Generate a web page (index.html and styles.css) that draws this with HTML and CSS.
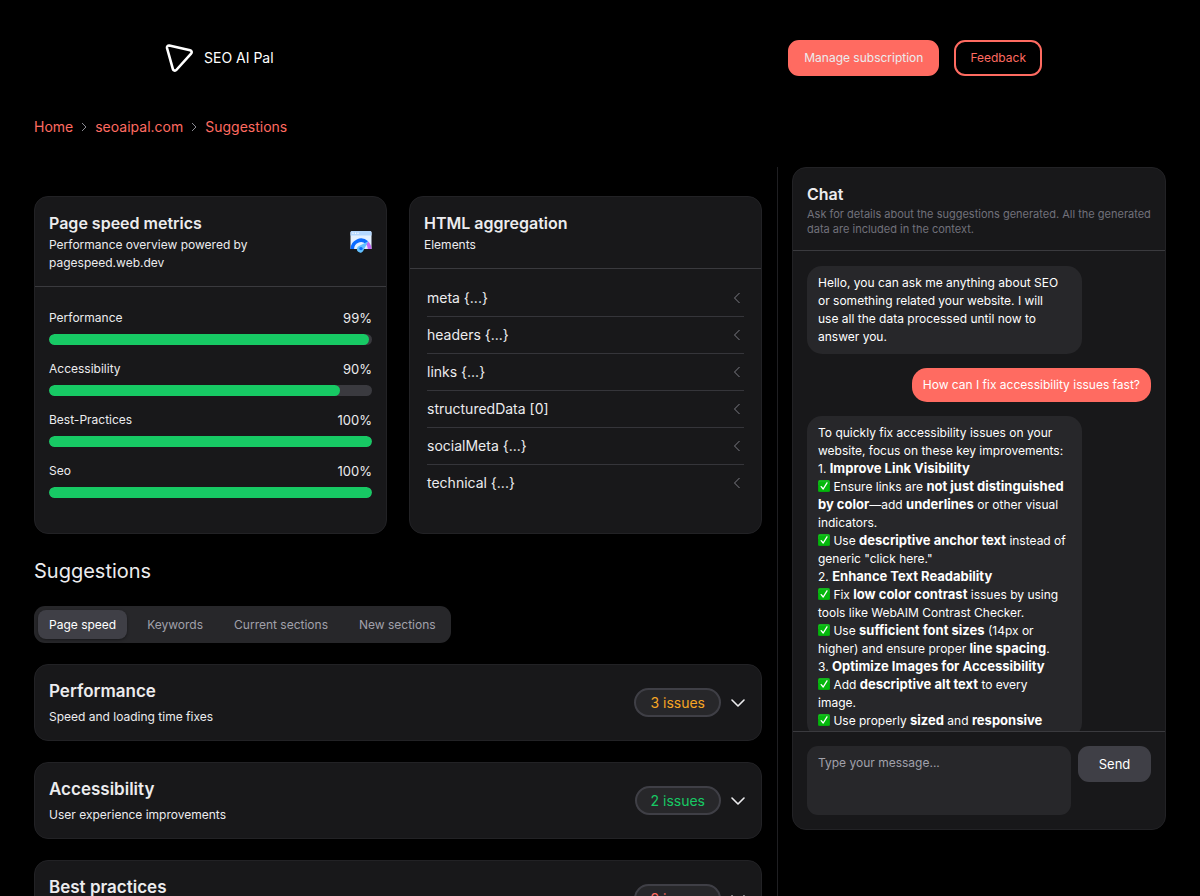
FILE: index.html
```html
<!DOCTYPE html>
<html lang="en">
<head>
<meta charset="utf-8">
<meta name="viewport" content="width=device-width, initial-scale=1">
<title>SEO AI Pal</title>
<link rel="stylesheet" href="styles.css">
</head>
<body>
<svg class="sprite" aria-hidden="true">
  <symbol id="check" viewBox="0 0 12 12">
    <rect width="12" height="12" rx="1.6" fill="#05a80c"/>
    <rect x=".6" y=".5" width="10.8" height="5" rx="1.2" fill="#3fd04a" opacity=".55"/>
    <rect x="1" y="1.4" width="10" height="9.6" rx="1" fill="#04b80c"/>
    <path d="M3.200 6.600 5.200 9 9 2.800" fill="none" stroke="#fff" stroke-width="1.300" stroke-linecap="round" stroke-linejoin="round"/>
  </symbol>
  <symbol id="left" viewBox="0 0 8 12"><path d="M6.500 1 1.500 6l5 5" fill="none" stroke="currentColor" stroke-width="1"/></symbol>
  <symbol id="right" viewBox="0 0 8 12"><path d="M2 2l4 4-4 4" fill="none" stroke="currentColor" stroke-width="1"/></symbol>
  <symbol id="down" viewBox="0 0 14 8"><path d="M1 1l6 6 6-6" fill="none" stroke="currentColor" stroke-width="1.600" stroke-linecap="round" stroke-linejoin="round"/></symbol>
</svg>
<div class="page">
  <header class="topbar">
    <a class="brand" href="#">
      <svg class="brand-mark" viewBox="0 0 40 32" aria-hidden="true"><path d="M11.300 3.600 32.100 8.200a2 2 0 0 1 1 3.400L18.300 28a2 2 0 0 1-3.400-.9L9 6a2 2 0 0 1 2.300-2.400Z" fill="none" stroke="#fff" stroke-width="2.600" stroke-linejoin="round"/></svg>
      <span>SEO AI Pal</span>
    </a>
    <div class="actions">
      <button class="btn btn-solid" type="button">Manage subscription</button>
      <button class="btn btn-outline" type="button">Feedback</button>
    </div>
  </header>

  <nav class="crumbs" aria-label="Breadcrumb">
    <a href="#">Home</a>
    <svg class="crumb-sep" aria-hidden="true"><use href="#right"/></svg>
    <a href="#">seoaipal.com</a>
    <svg class="crumb-sep" aria-hidden="true"><use href="#right"/></svg>
    <a href="#">Suggestions</a>
  </nav>

  <div class="layout">
    <main class="content">
      <div class="overview">
        <section class="card">
          <header class="card-head split">
            <div>
              <h2 class="card-title">Page speed metrics</h2>
              <p class="card-sub">Performance overview powered by pagespeed.web.dev</p>
            </div>
            <svg class="speed-icon" viewBox="0 0 22 22" aria-hidden="true">
              <path d="M2 0h18a1.500 1.500 0 0 1 1.500 1.500V18H.5V1.500A1.500 1.500 0 0 1 2 0Z" fill="#e3f0ff"/>
              <path d="M2 0h18a1.500 1.500 0 0 1 1.500 1.500V4.600H.5V1.500A1.500 1.500 0 0 1 2 0Z" fill="#b5d8ff"/>
              <circle cx="3" cy="2.300" r=".7" fill="#fff"/><circle cx="5.500" cy="2.300" r=".7" fill="#fff"/><circle cx="8" cy="2.300" r=".7" fill="#fff"/>
              <path d="M2.300 18a8.700 8.700 0 0 1 14.600-6.400" fill="none" stroke="#0b6bff" stroke-width="3.600"/>
              <path d="M17 11.700a8.700 8.700 0 0 1 2.700 6.300" fill="none" stroke="#c468f5" stroke-width="3.600"/>
              <path d="M18.300 10.200 13.800 18.800A3.500 3.500 0 1 1 9 14.900Z" fill="#62c0ff"/>
              <circle cx="11" cy="17.600" r="1.700" fill="#0b6bff"/>
            </svg>
          </header>
          <div class="metrics">
            <div class="metric">
              <div class="metric-row"><span id="m1">Performance</span><span class="value">99%</span></div>
              <div class="track" role="progressbar" aria-labelledby="m1" aria-valuenow="99"><div class="fill" style="width:99%"></div></div>
            </div>
            <div class="metric">
              <div class="metric-row"><span id="m2">Accessibility</span><span class="value">90%</span></div>
              <div class="track" role="progressbar" aria-labelledby="m2" aria-valuenow="90"><div class="fill" style="width:90%"></div></div>
            </div>
            <div class="metric">
              <div class="metric-row"><span id="m3">Best-Practices</span><span class="value">100%</span></div>
              <div class="track" role="progressbar" aria-labelledby="m3" aria-valuenow="100"><div class="fill" style="width:100%"></div></div>
            </div>
            <div class="metric">
              <div class="metric-row"><span id="m4">Seo</span><span class="value">100%</span></div>
              <div class="track" role="progressbar" aria-labelledby="m4" aria-valuenow="100"><div class="fill" style="width:100%"></div></div>
            </div>
          </div>
        </section>

        <section class="card">
          <header class="card-head">
            <h2 class="card-title">HTML aggregation</h2>
            <p class="card-sub">Elements</p>
          </header>
          <div class="elements">
            <button class="element" type="button">meta {...}<svg aria-hidden="true"><use href="#left"/></svg></button>
            <button class="element" type="button">headers {...}<svg aria-hidden="true"><use href="#left"/></svg></button>
            <button class="element" type="button">links {...}<svg aria-hidden="true"><use href="#left"/></svg></button>
            <button class="element" type="button">structuredData [0]<svg aria-hidden="true"><use href="#left"/></svg></button>
            <button class="element" type="button">socialMeta {...}<svg aria-hidden="true"><use href="#left"/></svg></button>
            <button class="element" type="button">technical {...}<svg aria-hidden="true"><use href="#left"/></svg></button>
          </div>
        </section>
      </div>

      <h1 class="heading">Suggestions</h1>
      <div class="tabs" role="tablist">
        <button class="tab active" type="button" role="tab" aria-selected="true">Page speed</button>
        <button class="tab" type="button" role="tab" aria-selected="false">Keywords</button>
        <button class="tab" type="button" role="tab" aria-selected="false">Current sections</button>
        <button class="tab" type="button" role="tab" aria-selected="false">New sections</button>
      </div>

      <div class="groups">
        <button class="card group" type="button">
          <span class="group-text"><span class="group-title">Performance</span><span class="card-sub">Speed and loading time fixes</span></span>
          <span class="badge warn">3 issues</span>
          <svg class="group-arrow" aria-hidden="true"><use href="#down"/></svg>
        </button>
        <button class="card group" type="button">
          <span class="group-text"><span class="group-title">Accessibility</span><span class="card-sub">User experience improvements</span></span>
          <span class="badge good">2 issues</span>
          <svg class="group-arrow" aria-hidden="true"><use href="#down"/></svg>
        </button>
        <button class="card group" type="button">
          <span class="group-text"><span class="group-title">Best practices</span><span class="card-sub">Code quality and standards</span></span>
          <span class="badge bad">9 issues</span>
          <svg class="group-arrow" aria-hidden="true"><use href="#down"/></svg>
        </button>
      </div>
    </main>

    <aside class="side">
      <section class="card chat">
        <header class="chat-head">
          <h2 class="card-title">Chat</h2>
          <p class="chat-note">Ask for details about the suggestions generated. All the generated data are included in the context.</p>
        </header>
        <div class="messages">
          <div class="bubble">Hello, you can ask me anything about SEO<br>or something related your website. I will<br>use all the data processed until now to<br>answer you.</div>
          <div class="bubble mine">How can I fix accessibility issues fast?</div>
          <div class="bubble">
            <p>To quickly fix accessibility issues on your<br>website, focus on these key improvements:</p>
            <p>1. <b>Improve Link Visibility</b></p>
            <p><svg class="check" role="img" aria-label="Done"><use href="#check"/></svg> Ensure links are <b>not just distinguished<br>by color</b>—add <b>underlines</b> or other visual<br>indicators.</p>
            <p><svg class="check" role="img" aria-label="Done"><use href="#check"/></svg> Use <b>descriptive anchor text</b> instead of<br>generic "click here."</p>
            <p>2. <b>Enhance Text Readability</b></p>
            <p><svg class="check" role="img" aria-label="Done"><use href="#check"/></svg> Fix <b>low color contrast</b> issues by using<br>tools like WebAIM Contrast Checker.</p>
            <p><svg class="check" role="img" aria-label="Done"><use href="#check"/></svg> Use <b>sufficient font sizes</b> (14px or<br>higher) and ensure proper <b>line spacing</b>.</p>
            <p>3. <b>Optimize Images for Accessibility</b></p>
            <p><svg class="check" role="img" aria-label="Done"><use href="#check"/></svg> Add <b>descriptive alt text</b> to every<br>image.</p>
            <p><svg class="check" role="img" aria-label="Done"><use href="#check"/></svg> Use properly <b>sized</b> and <b>responsive</b></p>
          </div>
        </div>
        <form class="composer">
          <textarea class="input" aria-label="Message" placeholder="Type your message..."></textarea>
          <button class="send" type="button">Send</button>
        </form>
      </section>
    </aside>
  </div>
</div>
</body>
</html>
```

FILE: styles.css
```css
* { box-sizing: border-box; }

body {
  margin: 0;
  background: #000;
  color: #ececee;
  font-family: Inter, "Liberation Sans", sans-serif;
  font-size: 12px;
  line-height: 18px;
}

h1, h2, p { margin: 0; }
a { color: inherit; text-decoration: none; }
button, textarea { font: inherit; color: inherit; border: 0; }
button { cursor: pointer; }
.sprite { display: none; }

.page {
  display: flex;
  flex-direction: column;
  height: 100vh;
  overflow-y: auto;
  scrollbar-width: none;
  padding: 40px 34px 0;
}

.topbar {
  display: flex;
  align-items: center;
  justify-content: space-between;
  width: 100%;
  max-width: 884px;
  margin: 0 auto;
}
.brand {
  display: flex;
  align-items: center;
  gap: 6px;
  color: #fff;
  font-size: 14px;
}
.brand-mark { width: 40px; height: 32px; }
.actions { display: flex; gap: 15px; }
.btn {
  height: 36px;
  padding: 0 14px;
  border: 2px solid #ff6b61;
  border-radius: 11px;
}
.btn-solid { background: #ff6b61; color: #ececee; }
.btn-outline { background: transparent; color: #ff6b61; }

.crumbs {
  display: flex;
  align-items: center;
  gap: 7px;
  margin-top: 42px;
  color: #ff6b61;
  font-size: 14px;
}
.crumb-sep { width: 8px; height: 12px; color: #8a8a92; }

.layout {
  display: grid;
  grid-template-columns: minmax(0, 1fr) 389px;
  gap: 15px;
  margin-top: 31px;
}
.content { padding-top: 29px; padding-bottom: 28px; }
.side {
  border-left: 1px solid #1f1f22;
  padding-left: 14px;
}

.card {
  background: #18181a;
  border: 1px solid #222225;
  border-radius: 14px;
}
.overview {
  display: grid;
  grid-template-columns: 1fr 1fr;
  gap: 22px;
}
.card-head {
  padding: 14px;
  border-bottom: 1px solid #3a3a3e;
}
.split {
  display: flex;
  align-items: center;
  justify-content: space-between;
  gap: 80px;
}
.card-title {
  font-size: 16px;
  line-height: 25px;
  font-weight: 600;
}
.speed-icon { flex: none; width: 22px; height: 22px; }

.metrics {
  display: grid;
  gap: 15px;
  padding: 22px 14px 35px;
}
.metric { display: grid; gap: 7px; }
.metric-row { display: flex; justify-content: space-between; }
.value { font-size: 13px; }
.track {
  height: 11px;
  border-radius: 6px;
  background: #3a3a3f;
  overflow: hidden;
}
.fill { height: 100%; border-radius: 6px; background: #17c964; }

.elements {
  display: flex;
  flex-direction: column;
  padding: 11px 17px;
}
.element {
  display: flex;
  align-items: center;
  justify-content: space-between;
  height: 37px;
  padding: 0 3px 0 0;
  background: transparent;
  border-bottom: 1px solid #35353a;
  font-size: 14px;
}
.element:last-child { border-bottom-color: transparent; }
.element svg { width: 8px; height: 12px; color: #7c7c84; }

.heading {
  margin-top: 22px;
  font-size: 20px;
  line-height: 30px;
  font-weight: 400;
}
.tabs {
  display: inline-flex;
  gap: 9px;
  margin-top: 20px;
  padding: 4px;
  border-radius: 11px;
  background: #27272a;
}
.tab {
  height: 29px;
  padding: 0 11px;
  border-radius: 8px;
  background: transparent;
  color: #a1a1aa;
}
.tab.active {
  background: #3f3f46;
  color: #fff;
  box-shadow: 0 1px 3px rgba(0, 0, 0, .4);
}

.groups { display: grid; gap: 21px; margin-top: 21px; }
.group {
  display: flex;
  align-items: center;
  width: 100%;
  min-height: 77px;
  padding: 14px 16px 14px 14px;
  text-align: left;
}
.group-text { display: grid; gap: 4px; flex: 1; }
.group-title { font-size: 17px; line-height: 25px; font-weight: 600; }
.badge {
  padding: 2px 14px;
  border: 2px solid #3f3f46;
  border-radius: 15px;
  background: #27272a;
  font-size: 14px;
  line-height: 21px;
}
.warn { color: #f5a524; }
.good { color: #17c964; }
.bad { color: #ff6b61; }
.group-arrow { width: 14px; height: 8px; margin-left: 10px; }

.chat {
  display: flex;
  flex-direction: column;
  height: 74vh;
  overflow: hidden;
}
.chat-head {
  padding: 14px 14px 13px;
  border-bottom: 1px solid #3a3a3e;
}
.chat-note { color: #71717a; font-size: 11px; line-height: 15px; }
.messages {
  display: flex;
  flex: 1;
  flex-direction: column;
  align-items: flex-start;
  gap: 14px;
  min-height: 0;
  overflow-y: auto;
  scrollbar-width: none;
  padding: 15px 14px 0;
}
.bubble {
  flex: none;
  width: 80%;
  padding: 8px 11px;
  border-radius: 15px;
  background: #27272a;
  color: #fff;
}
.bubble b { font-size: 13px; font-weight: 700; line-height: 1; }
.mine { align-self: flex-end; width: auto; background: #ff6b61; }
.check { width: 12px; height: 12px; vertical-align: -1px; }

.composer {
  display: flex;
  align-items: flex-start;
  gap: 7px;
  padding: 14px;
  border-top: 1px solid #3a3a3e;
}
.input {
  flex: 1;
  min-width: 0;
  height: 69px;
  padding: 8px 11px;
  border-radius: 11px;
  background: #27272a;
  resize: none;
}
.input::placeholder { color: #a1a1aa; }
.send {
  width: 73px;
  height: 36px;
  border-radius: 11px;
  background: #3f3f46;
  color: #fff;
  font-size: 13px;
}
```
